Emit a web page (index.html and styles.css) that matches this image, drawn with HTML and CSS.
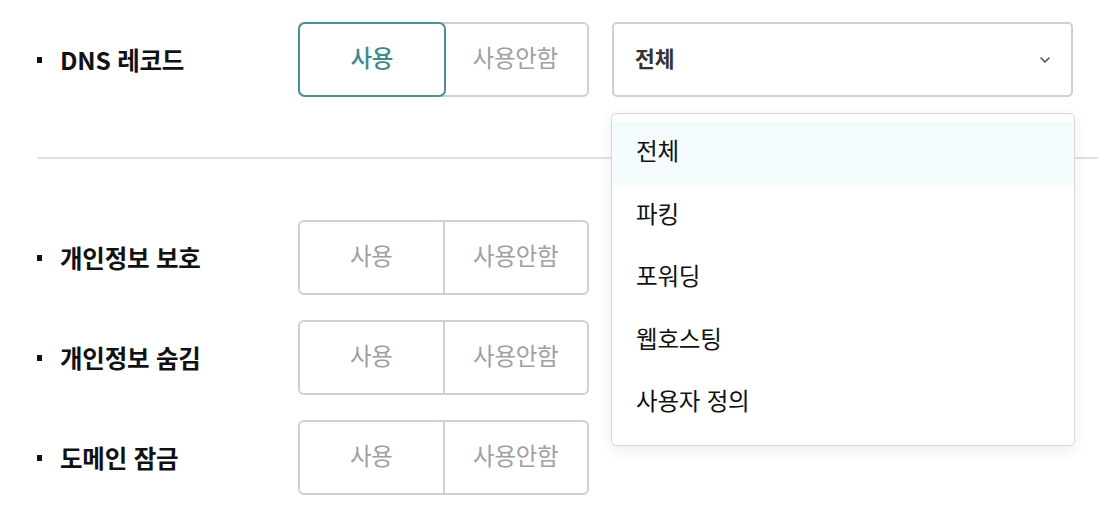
FILE: index.html
```html
<!DOCTYPE html>
<html lang="ko">
<head>
    <meta charset="UTF-8">
    <meta name="viewport" content="width=device-width, initial-scale=1.0">
    <title>도메인 설정</title>
    <link rel="stylesheet" href="styles.css">
</head>
<body>
    <main class="settings">
        <!-- DNS 레코드 -->
        <section class="group top">
            <div class="row">
                <span class="label">DNS 레코드</span>
                <div class="toggle">
                    <button class="on">사용</button>
                    <button>사용안함</button>
                </div>
                <div class="select">
                    <span>전체</span>
                    <svg class="chev" width="12" height="8" viewBox="0 0 12 8"><path d="M2 2l4 4 4-4" fill="none" stroke="#555" stroke-width="1.6" stroke-linecap="round" stroke-linejoin="round"/></svg>
                </div>
            </div>
        </section>

        <hr class="divider">

        <section class="group">
            <div class="row">
                <span class="label">개인정보 보호</span>
                <div class="toggle">
                    <button>사용</button>
                    <button>사용안함</button>
                </div>
            </div>
            <div class="row">
                <span class="label">개인정보 숨김</span>
                <div class="toggle">
                    <button>사용</button>
                    <button>사용안함</button>
                </div>
            </div>
            <div class="row">
                <span class="label">도메인 잠금</span>
                <div class="toggle">
                    <button>사용</button>
                    <button>사용안함</button>
                </div>
            </div>
        </section>

        <!-- 선택 목록 -->
        <ul class="menu">
            <li class="hover">전체</li>
            <li>파킹</li>
            <li>포워딩</li>
            <li>웹호스팅</li>
            <li>사용자 정의</li>
        </ul>
    </main>
</body>
</html>
```

FILE: styles.css
```css
body {
    margin: 0;
    padding: 0;
    background: #fff;
    color: #111;
    font-family: "Noto Sans CJK KR", "Noto Sans", sans-serif;
}
.settings {
    position: relative;
    width: 1098px;
    height: 530px;
    overflow: hidden;
}
.group {
    padding-left: 37px;
    display: flex;
    flex-direction: column;
    gap: 25px;
}
.group.top {
    padding-top: 22px;
}
.row {
    display: flex;
    align-items: center;
    height: 75px;
}
.label {
    width: 261px;
    display: flex;
    align-items: center;
    font-size: 24.5px;
    font-weight: bold;
    letter-spacing: -0.2px;
    color: #111;
}
.label::before {
    content: "";
    width: 5px;
    height: 6px;
    background: #111;
    margin-right: 18px;
}
.toggle {
    display: flex;
    width: 291px;
    height: 75px;
    box-sizing: border-box;
    border: 2px solid #cdd0d7;
    border-radius: 6px;
}
.toggle button {
    flex: 1;
    background: #fff;
    border: none;
    border-radius: 5px;
    font-family: inherit;
    font-size: 23.5px;
    letter-spacing: -0.3px;
    color: #a0a0a0;
    padding: 0 0 6px;
}
.toggle button + button {
    border-left: 2px solid #cdd0d7;
    border-radius: 0 5px 5px 0;
}
.toggle button.on {
    color: #3f8a8e;
    font-weight: 500;
    box-shadow: 0 0 0 2px #4c8f94;
    position: relative;
    z-index: 1;
    border-radius: 5px;
}
.toggle button.on + button {
    border-left: none;
}
.select {
    margin-left: 23px;
    width: 461px;
    height: 75px;
    box-sizing: border-box;
    border: 2px solid #cdd0d7;
    border-radius: 5px;
    display: flex;
    align-items: center;
    justify-content: space-between;
    padding: 0 20px 0 21px;
    font-size: 21.5px;
    font-weight: bold;
    color: #333;
}
.select span {
    padding-bottom: 4px;
}
.divider {
    margin: 60px 0 61px 38px;
    border: none;
    border-top: 2px solid #e0e0e0;
}
.menu {
    position: absolute;
    left: 611px;
    top: 113px;
    width: 464px;
    box-sizing: border-box;
    margin: 0;
    padding: 8px 0 10px;
    list-style: none;
    background: #fff;
    border: 1.5px solid #d8d8d8;
    border-radius: 5px;
    box-shadow: 0 4px 14px rgba(0, 0, 0, 0.08);
}
.menu li {
    height: 62.5px;
    line-height: 56px;
    padding-left: 24px;
    font-size: 23.5px;
    letter-spacing: -0.2px;
    color: #111;
}
.menu li.hover {
    background: #f4fbfd;
}
```
